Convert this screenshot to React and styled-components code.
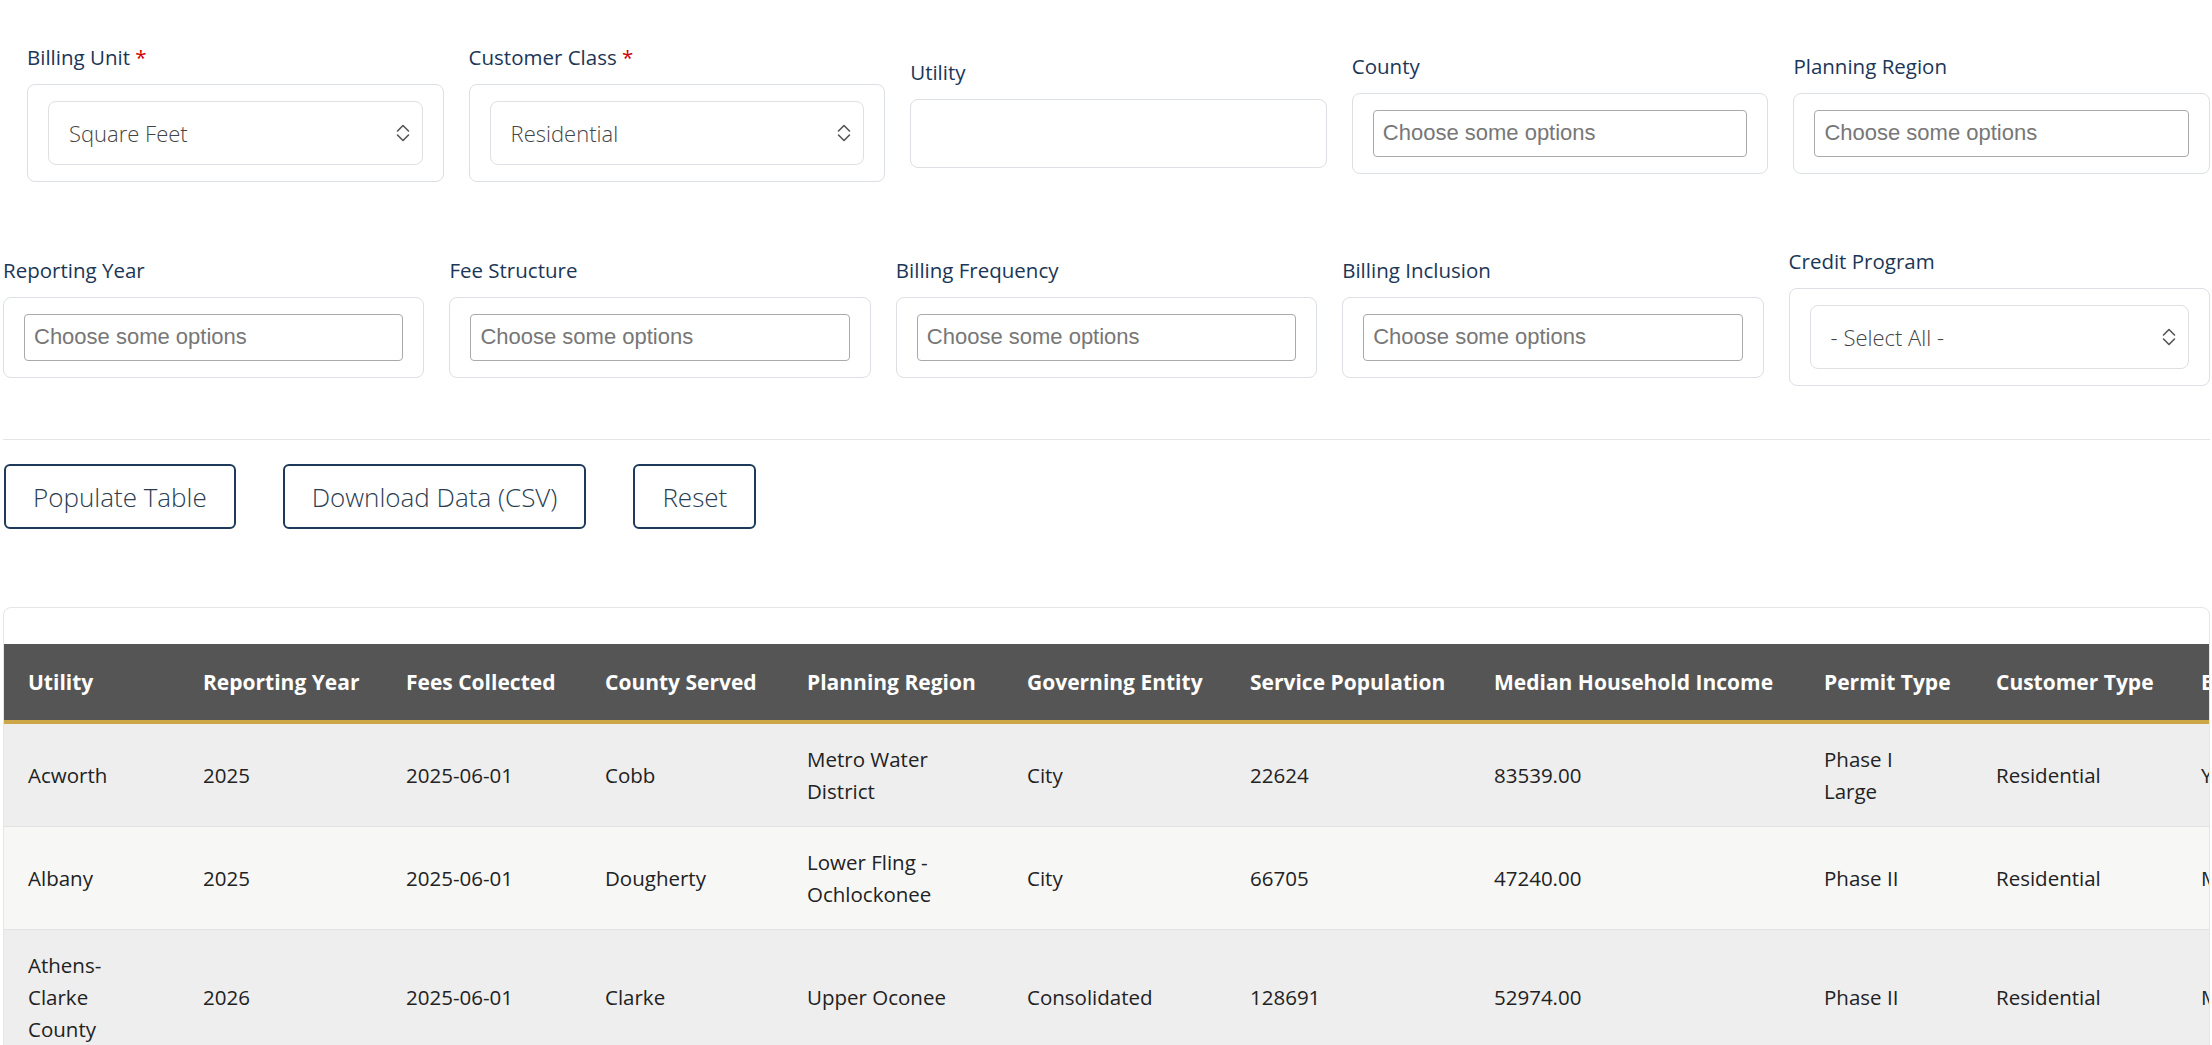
import React from 'react';
import styled, { createGlobalStyle } from 'styled-components';

const GlobalStyle = createGlobalStyle`
  html, body {
    margin: 0;
    padding: 0;
    overflow: hidden;
    background: #fff;
    font-family: "Open Sans", "Liberation Sans", sans-serif;
  }
  * {
    box-sizing: border-box;
  }
`;

const Page = styled.div`
  width: 2210px;
  padding: 42px 0 0 3px;
`;

const FilterRow = styled.div`
  display: grid;
  grid-template-columns: repeat(5, 1fr);
  column-gap: 25px;
  align-items: center;
  padding-left: ${props => props.$indent || 0}px;
  margin-bottom: ${props => props.$spaceBelow || 0}px;
`;

const Field = styled.div`
  display: flex;
  flex-direction: column;
`;

const Label = styled.label`
  font-size: 20.5px;
  line-height: 30px;
  color: #1b3656;
  margin-bottom: 12px;
`;

const Required = styled.span`
  color: #d10000;
`;

const Panel = styled.div`
  border: 1px solid #dcdfe3;
  border-radius: 8px;
  padding: 16px 20px;
`;

const SelectBox = styled.div`
  height: 64px;
  border: 1px solid #dee0e3;
  border-radius: 8px;
  display: flex;
  align-items: center;
  justify-content: space-between;
  padding: 0 11px 0 20px;
  font-size: 22px;
  font-weight: 300;
  color: #444;
  background: #fff;
`;

const TextInput = styled.input`
  width: 100%;
  height: 69px;
  border: 1px solid #dcdfe3;
  border-radius: 8px;
  background: #fff;
  outline: none;
`;

const MultiInput = styled.input`
  width: 100%;
  height: 47px;
  border: 1px solid #aaa;
  border-radius: 4px;
  padding: 0 9px;
  font-family: "Liberation Sans", Arial, sans-serif;
  font-size: 22px;
  color: #333;
  background: #fff;
  outline: none;

  &::placeholder {
    color: #777;
  }
`;

const Divider = styled.hr`
  border: none;
  border-top: 1px solid #e5e5e5;
  margin: 0 0 24px 0;
`;

const ButtonRow = styled.div`
  display: flex;
  gap: 47px;
  padding-left: 1px;
`;

const Button = styled.button`
  height: 65px;
  padding: 0 27px;
  border: 2px solid #1d3a5a;
  border-radius: 6px;
  background: #fff;
  color: #2a3d52;
  font-family: "Open Sans", sans-serif;
  font-size: 26px;
  font-weight: 300;
  cursor: pointer;
`;

const Card = styled.div`
  margin-top: 78px;
  border: 1px solid #e6e6e6;
  border-radius: 8px;
  padding-top: 36px;
  overflow: hidden;
`;

const Table = styled.table`
  border-collapse: collapse;
  table-layout: fixed;
  width: ${props => props.$width}px;
`;

const HeadCell = styled.th`
  background: #555555;
  color: #fff;
  font-size: 21px;
  font-weight: 700;
  line-height: 32px;
  text-align: left;
  padding: 22px 24px;
  border-bottom: 4px solid #cda648;
  white-space: nowrap;
  overflow: hidden;
`;

const Row = styled.tr`
  background: ${props => (props.$alt ? '#f7f7f6' : '#eeeeee')};
`;

const Cell = styled.td`
  font-size: 20.5px;
  line-height: 32px;
  color: #222;
  padding: 19px 24px;
  border-bottom: 1px solid #e2e2e2;
  vertical-align: middle;
`;

function Chevrons() {
  return (
    <svg width="16" height="18" viewBox="0 0 16 18" fill="none" stroke="#555" strokeWidth="1.6" strokeLinecap="round" strokeLinejoin="round">
      <polyline points="2.5,7 8,1.5 13.5,7" />
      <polyline points="2.5,11 8,16.5 13.5,11" />
    </svg>
  );
}

const columns = [
  { title: 'Utility', width: 175 },
  { title: 'Reporting Year', width: 203 },
  { title: 'Fees Collected', width: 199 },
  { title: 'County Served', width: 202 },
  { title: 'Planning Region', width: 220 },
  { title: 'Governing Entity', width: 223 },
  { title: 'Service Population', width: 244 },
  { title: 'Median Household Income', width: 330 },
  { title: 'Permit Type', width: 172 },
  { title: 'Customer Type', width: 205 },
  { title: 'Billing Frequency', width: 230 },
  { title: 'Billing Inclusion', width: 220 },
];

const rows = [
  ['Acworth', '2025', '2025-06-01', 'Cobb', 'Metro Water District', 'City', '22624', '83539.00', 'Phase I Large', 'Residential', 'Yearly', 'Property Tax'],
  ['Albany', '2025', '2025-06-01', 'Dougherty', 'Lower Fling - Ochlockonee', 'City', '66705', '47240.00', 'Phase II', 'Residential', 'Monthly', 'Utility Bill'],
  ['Athens-Clarke County', '2026', '2025-06-01', 'Clarke', 'Upper Oconee', 'Consolidated', '128691', '52974.00', 'Phase II', 'Residential', 'Monthly', 'Utility Bill'],
];

function SelectField({ label, value, required }) {
  return (
    <Field>
      <Label>
        {label}
        {required && <Required> *</Required>}
      </Label>
      <Panel>
        <SelectBox>
          <span>{value}</span>
          <Chevrons />
        </SelectBox>
      </Panel>
    </Field>
  );
}

function MultiField({ label }) {
  return (
    <Field>
      <Label>{label}</Label>
      <Panel>
        <MultiInput placeholder="Choose some options" readOnly />
      </Panel>
    </Field>
  );
}

export default function App() {
  const tableWidth = columns.reduce((sum, c) => sum + c.width, 0);

  return (
    <>
      <GlobalStyle />
      <Page>
        <FilterRow $indent={24} $spaceBelow={64}>
          <SelectField label="Billing Unit" value="Square Feet" required />
          <SelectField label="Customer Class" value="Residential" required />
          <Field>
            <Label>Utility</Label>
            <TextInput />
          </Field>
          <MultiField label="County" />
          <MultiField label="Planning Region" />
        </FilterRow>

        <FilterRow $spaceBelow={53}>
          <MultiField label="Reporting Year" />
          <MultiField label="Fee Structure" />
          <MultiField label="Billing Frequency" />
          <MultiField label="Billing Inclusion" />
          <SelectField label="Credit Program" value="- Select All -" />
        </FilterRow>

        <Divider />

        <ButtonRow>
          <Button>Populate Table</Button>
          <Button>Download Data (CSV)</Button>
          <Button>Reset</Button>
        </ButtonRow>

        <Card>
          <Table $width={tableWidth}>
            <colgroup>
              {columns.map(c => (
                <col key={c.title} style={{ width: c.width }} />
              ))}
            </colgroup>
            <thead>
              <tr>
                {columns.map(c => (
                  <HeadCell key={c.title}>{c.title}</HeadCell>
                ))}
              </tr>
            </thead>
            <tbody>
              {rows.map((r, i) => (
                <Row key={r[0]} $alt={i % 2 === 1}>
                  {r.map((v, j) => (
                    <Cell key={j}>{v}</Cell>
                  ))}
                </Row>
              ))}
            </tbody>
          </Table>
        </Card>
      </Page>
    </>
  );
}
